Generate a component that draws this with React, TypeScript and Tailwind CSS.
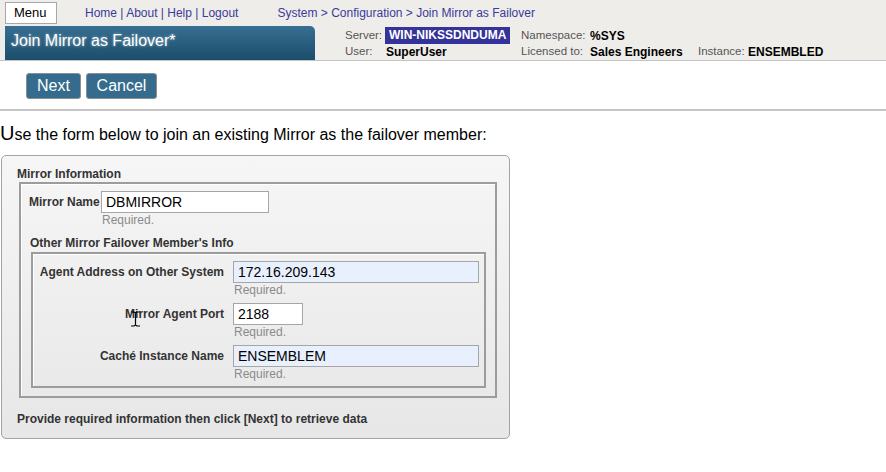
import React from "react";

const font = "font-['Liberation_Sans',Arial,Helvetica,sans-serif]";

const Field = ({
  label,
  value,
  width,
  autofill,
}: {
  label: string;
  value: string;
  width: string;
  autofill?: boolean;
}) => (
  <div className="flex items-start mb-[6px] last:mb-0">
    <div className="w-[200px] h-[22px] pr-[9px] flex items-center justify-end text-[12px] font-bold text-[#333]">
      {label}
    </div>
    <div className="flex flex-col">
      <div
        className={`${width} h-[22px] border border-[#a6a6a6] flex items-center pl-[4px] text-[14px] text-black ${
          autofill ? "bg-[#e8f0fe]" : "bg-white"
        }`}
      >
        {value}
      </div>
      <div className="h-[14px] leading-[14px] pl-[1px] text-[12px] text-[#8a8a8a]">Required.</div>
    </div>
  </div>
);

const App = () => {
  return (
    <div className={`relative w-[886px] h-[472px] overflow-hidden bg-white text-black ${font}`}>
      {/*---------Header----------*/}
      <div className="h-[61px] bg-[#eeede9] border-b border-[#c4c4c4]">
        <div className="flex items-center h-[26px] pt-[2px] pb-[2px]">
          <div className="ml-[5px] w-[52px] h-[22px] bg-white border border-[#a8a8a8] flex items-center pl-[8px] text-[13px]">
            Menu
          </div>
          <div className="ml-[28px] text-[12px] text-[#3b3a9b] whitespace-pre">
            Home | About | Help | Logout
          </div>
          <div className="ml-[39px] text-[12px] text-[#3b3a9b] whitespace-pre">
            System &gt; Configuration &gt; Join Mirror as Failover
          </div>
        </div>
        <div className="flex h-[34px]">
          <div className="ml-[5px] w-[310px] h-[34px] rounded-tr-[5px] bg-gradient-to-b from-[#376f92] to-[#1c4d6b] pl-[6px] pt-[3px] text-[16px] text-white [text-shadow:0_0_3px_rgba(255,255,255,0.55)]">
            Join Mirror as Failover*
          </div>
          <div className="ml-[30px] pt-[2px] grid grid-cols-[40px_136px_69px_108px_50px_auto] auto-rows-[16px] items-center text-[11.5px] text-[#555]">
            <span>Server:</span>
            <span>
              <span className="inline-block h-[17px] leading-[17px] px-[4px] bg-[#333399] text-[12px] text-white font-bold">
                WIN-NIKSSDNDUMA
              </span>
            </span>
            <span>Namespace:</span>
            <span className="text-[12px] font-bold text-black">%SYS</span>
            <span></span>
            <span></span>
            <span>User:</span>
            <span className="pl-[1px] text-[12px] font-bold text-black">SuperUser</span>
            <span>Licensed to:</span>
            <span className="text-[12px] font-bold text-black">Sales Engineers</span>
            <span>Instance:</span>
            <span className="text-[12px] font-bold text-black">ENSEMBLED</span>
          </div>
        </div>
      </div>

      {/*---------Buttons----------*/}
      <div className="flex gap-[5px] pl-[26px] pt-[12px] pb-[10px]">
        <button className="w-[55px] h-[26px] rounded-[3px] border border-[#8a8f93] bg-[#356c8e] text-[16px] text-white">
          Next
        </button>
        <button className="w-[71px] h-[26px] rounded-[3px] border border-[#8a8f93] bg-[#356c8e] text-[16px] text-white">
          Cancel
        </button>
      </div>
      <div className="h-[2px] bg-[#c6c6c6]" />

      <div className="mt-[10px] h-[24px] leading-[24px] text-[16px] text-black">
        <span className="text-[20px]">U</span>se the form below to join an existing Mirror as the failover member:
      </div>

      {/*---------Form panel----------*/}
      <div className="mt-[10px] ml-[1px] w-[509px] h-[284px] rounded-[5px] border border-[#a3a3a3] bg-gradient-to-b from-[#f6f6f6] to-[#e7e7e7] pl-[15px] pt-[11px]">
        <div className="h-[14px] leading-[14px] text-[12px] font-bold text-[#333]">Mirror Information</div>
        <div className="mt-[1px] ml-[2px] w-[478px] border-2 border-[#9c9c9c] shadow-[inset_1px_1px_0_#fff] pl-[8px] pr-[9px] pt-[7px] pb-[8px]">
          <div className="flex items-center">
            <div className="w-[72px] text-[12px] font-bold text-[#333]">Mirror Name</div>
            <div className="w-[168px] h-[22px] bg-white border border-[#a6a6a6] flex items-center pl-[4px] text-[14px]">
              DBMIRROR
            </div>
          </div>
          <div className="ml-[73px] h-[14px] leading-[14px] text-[12px] text-[#8a8a8a]">Required.</div>
          <div className="mt-[9px] ml-[1px] h-[14px] leading-[14px] text-[12px] font-bold text-[#333]">
            Other Mirror Failover Member's Info
          </div>
          <div className="mt-[2px] ml-[2px] border-2 border-[#9c9c9c] shadow-[inset_1px_1px_0_#fff] pt-[7px] pb-[5px]">
            <Field label="Agent Address on Other System" value="172.16.209.143" width="w-[246px]" autofill />
            <Field label="Mirror Agent Port" value="2188" width="w-[70px]" />
            <Field label="Caché Instance Name" value="ENSEMBLEM" width="w-[246px]" autofill />
          </div>
        </div>
        <div className="mt-[14px] h-[14px] leading-[14px] text-[12px] font-bold text-[#333]">
          Provide required information then click [Next] to retrieve data
        </div>
      </div>

      {/* mouse cursor (I-beam) */}
      <svg className="absolute left-[130px] top-[311px]" width="11" height="16" viewBox="0 0 11 16">
        <path d="M1 1h3l1.5 1L7 1h3M5.5 2v12M1 15h3l1.5-1L7 15h3" fill="none" stroke="#000" strokeWidth="1.2" />
      </svg>
    </div>
  );
};

export default App;
